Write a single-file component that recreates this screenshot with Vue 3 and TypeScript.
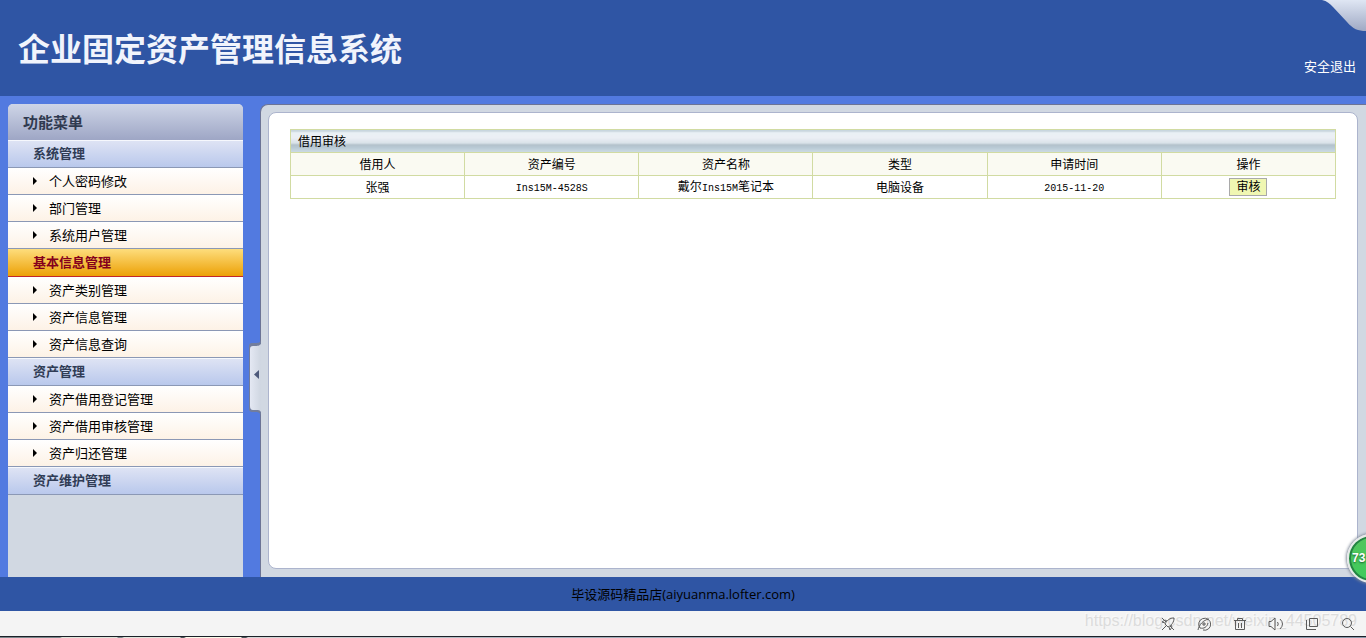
<script setup lang="ts">
import { ref } from 'vue'

interface MenuGroup {
  title: string
  active?: boolean
  items: string[]
}

interface Loan {
  borrower: string
  code: string
  name: [string, string, string]
  kind: string
  date: string
}

const groups: MenuGroup[] = [
  { title: '系统管理', items: ['个人密码修改', '部门管理', '系统用户管理'] },
  { title: '基本信息管理', active: true, items: ['资产类别管理', '资产信息管理', '资产信息查询'] },
  { title: '资产管理', items: ['资产借用登记管理', '资产借用审核管理', '资产归还管理'] },
  { title: '资产维护管理', items: [] },
]

const columns: string[] = ['借用人', '资产编号', '资产名称', '类型', '申请时间', '操作']

const loans = ref<Loan[]>([
  { borrower: '张强', code: 'Ins15M-4528S', name: ['戴尔', 'Ins15M', '笔记本'], kind: '电脑设备', date: '2015-11-20' },
])
</script>

<template>
  <div class="page">
    <header class="header">
      <h1>企业固定资产管理信息系统</h1>
      <a class="logout" href="#">安全退出</a>
      <svg class="corner" width="44" height="32" viewBox="0 0 44 32" aria-hidden="true">
        <defs>
          <linearGradient id="cornerFill" x1="0" y1="0" x2="0" y2="1">
            <stop offset="0" stop-color="#dfe6f3" />
            <stop offset="1" stop-color="#9fa9c4" />
          </linearGradient>
        </defs>
        <path d="M0 0C5 1 8 4 11 7L25 22C31 29 36 31 44 31V0Z" fill="url(#cornerFill)" />
      </svg>
    </header>

    <main class="main">
      <nav class="sidebar">
        <h2>功能菜单</h2>
        <section v-for="group in groups" :key="group.title">
          <h3 :class="{ active: group.active }">{{ group.title }}</h3>
          <ul v-if="group.items.length">
            <li v-for="item in group.items" :key="item">
              <a href="#">
                <svg width="4" height="8" viewBox="0 0 4 8" aria-hidden="true"><path d="M0 0L4 4L0 8Z" /></svg>
                <span>{{ item }}</span>
              </a>
            </li>
          </ul>
        </section>
      </nav>

      <div class="frame">
        <button class="toggle" type="button" aria-label="收起菜单">
          <svg width="12" height="74" viewBox="0 0 12 74" aria-hidden="true">
            <defs>
              <linearGradient id="tabFill" x1="0" y1="0" x2="1" y2="0">
                <stop offset="0" stop-color="#e4e8f3" />
                <stop offset="1" stop-color="#cfd6e1" />
              </linearGradient>
            </defs>
            <path d="M12 0C10 2 9 2 3 2Q0 2 0 5V68Q0 71 3 71H8Q10 71 12 74Z" fill="#727d9c" />
            <path d="M12 3C10 5 9 5 4 5Q1 5 1 8V65Q1 69 4 69H9Q11 69 12 71Z" fill="url(#tabFill)" />
            <path d="M10 29V38L5 33.500Z" fill="#4d597b" />
          </svg>
        </button>
        <div class="sheet">
          <table>
            <thead>
              <tr class="caption"><th colspan="6">借用审核</th></tr>
              <tr class="heads"><th v-for="column in columns" :key="column">{{ column }}</th></tr>
            </thead>
            <tbody>
              <tr v-for="loan in loans" :key="loan.code">
                <td>{{ loan.borrower }}</td>
                <td><span class="latin">{{ loan.code }}</span></td>
                <td>{{ loan.name[0] }}<span class="latin">{{ loan.name[1] }}</span>{{ loan.name[2] }}</td>
                <td>{{ loan.kind }}</td>
                <td><span class="latin">{{ loan.date }}</span></td>
                <td class="action"><button class="review" type="button">审核</button></td>
              </tr>
            </tbody>
          </table>
        </div>
      </div>
      <div class="meter">73</div>
    </main>

    <footer class="footer">毕设源码精品店(aiyuanma.lofter.com)</footer>

    <div class="statusbar">
      <span class="mark">https://blog.csdn.net/weixin_44505789</span>
      <button type="button" aria-label="加速">
        <svg width="14" height="14" viewBox="0 0 14 14"><path d="M13 1C9 1 6 3 4 7L7 10C11 8 13 5 13 1ZM4 6L1 5L4 3L6 4M8 10L9 13L11 10L10 8M5 9L1 13M1 1L5 5M9 9L13 13" /></svg>
      </button>
      <button type="button" aria-label="省流">
        <svg width="14" height="14" viewBox="0 0 14 14"><path d="M3 11A6 6 0 1 1 6 13M1 13C2 8 6 3 12 2M3 11C7 12 10 10 11 6M5 7H9M7 5V9" /></svg>
      </button>
      <button type="button" aria-label="清理">
        <svg width="14" height="14" viewBox="0 0 14 14"><path d="M1 3.500H13M4.500 3V1.500H9.500V3M2.500 4V12.500H11.500V4M5.500 6V11M8.500 6V11" /></svg>
      </button>
      <button type="button" aria-label="声音">
        <svg width="16" height="14" viewBox="0 0 16 14"><path d="M1 4.500H3L7 1V13L3 9.500H1ZM9.500 5Q11 7 9.500 9M12 2Q17 7 12 12" /></svg>
      </button>
      <button type="button" aria-label="窗口">
        <svg width="14" height="14" viewBox="0 0 14 14"><path d="M4.500 1.500H12.500V9.500H4.500ZM1.500 3V12.500H11" /></svg>
      </button>
      <button type="button" aria-label="缩放">
        <svg width="14" height="14" viewBox="0 0 14 14"><circle cx="6" cy="6" r="4.500" /><path d="M9.500 9.500L13 13" /></svg>
      </button>
    </div>
    <div class="taskbar"></div>
  </div>
</template>

<style>
body {
  margin: 0;
}
</style>

<style scoped>
.page {
  display: flex;
  flex-direction: column;
  min-height: 100vh;
  overflow: hidden;
  background: #527ae0;
  color: #000;
  font-family: "Open Sans", "Noto Sans CJK SC", sans-serif;
  font-size: 13px;
}

h1,
h2,
h3,
ul {
  margin: 0;
  padding: 0;
  list-style: none;
}

a {
  color: inherit;
  text-decoration: none;
}

button {
  padding: 0;
  border: 0;
  background: none;
  font-family: inherit;
}

svg {
  display: block;
}

.header {
  position: relative;
  display: flex;
  justify-content: space-between;
  box-sizing: border-box;
  height: 96px;
  padding: 0 10px 0 18px;
  background: #2f55a4;
  color: #f1f4fc;
}

h1 {
  font-size: 32px;
  line-height: 98px;
  font-weight: 700;
}

.logout {
  padding-top: 56px;
  line-height: 20px;
  color: #fff;
}

.corner {
  position: absolute;
  top: 0;
  right: 0;
}

.main {
  position: relative;
  flex: 1;
  display: flex;
  gap: 17px;
  padding: 8px 0 0 8px;
}

.sidebar {
  flex: none;
  width: 235px;
  border-radius: 5px 5px 0 0;
  overflow: hidden;
  background: #d1d8e2;
}

h2 {
  height: 36px;
  padding-left: 15px;
  background: linear-gradient(#ced5e7, #9ea6c5);
  color: #303a50;
  font-size: 15px;
  line-height: 36px;
}

h3 {
  box-sizing: border-box;
  height: 28px;
  padding-left: 25px;
  border-top: 1px solid #f6f8fd;
  border-bottom: 1px solid #8b98b5;
  background: linear-gradient(#dee3f4, #b9c8ec);
  color: #303c55;
  font-size: 13px;
  line-height: 25px;
}

h3.active {
  border-top-color: #fddc7c;
  border-bottom-color: #c1272d;
  background: linear-gradient(#fddb78, #eca107);
  color: #84001c;
}

li a {
  box-sizing: border-box;
  display: flex;
  align-items: center;
  gap: 12px;
  height: 27px;
  padding-left: 25px;
  border-bottom: 1px solid #8b98b5;
  background: linear-gradient(#fff, #fdf2e6);
  line-height: 26px;
}

.frame {
  position: relative;
  flex: 1;
  display: flex;
  padding: 7px 8px 8px 7px;
  border-top: 1px solid #6c7496;
  border-left: 1px solid #6c7496;
  border-radius: 8px 0 0 0;
  background: #d1d8e2;
}

.toggle {
  position: absolute;
  left: -12px;
  top: 50%;
}

.sheet {
  flex: 1;
  padding: 16px 21px;
  border: 1px solid #acb4cd;
  border-radius: 8px;
  background: #fff;
}

table {
  width: 100%;
  table-layout: fixed;
  border-collapse: collapse;
  font-size: 12px;
  line-height: 18px;
}

th,
td {
  height: 20px;
  padding: 2px 0 0;
  border: 1px solid #d1dba2;
  text-align: center;
  font-weight: 400;
}

.caption th {
  padding-left: 7px;
  background: linear-gradient(#b9c8d2 0, #e9f0f5 2px, #eceff5 7px, #d8e1e8 13px, #b1c0ca 14px, #b8c9d4 17px, #cddce5 22px);
  text-align: left;
}

.heads th {
  background: #fafaf2;
}

td.action {
  height: 22px;
  padding: 0;
}

.latin {
  font-family: "Liberation Mono", monospace;
  font-size: 10px;
}

.review {
  display: block;
  box-sizing: border-box;
  width: 38px;
  height: 18px;
  margin: 0 auto;
  border: 1px solid #a9a9a9;
  background: #f0f7b2;
  color: #000;
  font-size: 12px;
  line-height: 16px;
}

.meter {
  position: absolute;
  right: -30px;
  bottom: -6px;
  box-sizing: border-box;
  width: 49px;
  height: 49px;
  padding-left: 3px;
  border: 2px solid #e6e9e9;
  border-radius: 50%;
  background: linear-gradient(#53c55e, #3ecb5c);
  box-shadow: inset 0 0 0 2px #248343, 0 0 3px 1px #808a99;
  color: #fff;
  font-family: "Liberation Sans", Arial, sans-serif;
  font-size: 12px;
  font-weight: 700;
  line-height: 44px;
  text-shadow: 0 1px 2px #135c2a;
}

.footer {
  height: 34px;
  background: #2f55a4;
  line-height: 34px;
  text-align: center;
}

.statusbar {
  position: relative;
  box-sizing: border-box;
  display: flex;
  align-items: center;
  justify-content: flex-end;
  gap: 12px;
  height: 25px;
  padding-right: 6px;
  background: #f4f4f4;
}

.statusbar button {
  position: relative;
  display: flex;
  justify-content: center;
  width: 24px;
}

.statusbar svg {
  fill: none;
  stroke: #5c5c5c;
  stroke-width: 1;
}

.mark {
  position: absolute;
  right: 9px;
  top: 0;
  color: #dcdcdc;
  font-family: "Liberation Sans", Arial, sans-serif;
  font-size: 16px;
  line-height: 19px;
  text-shadow: -1px -1px 0 #fafafa;
}

.taskbar {
  height: 1px;
  border-top: 1px solid #1b2028;
  background: linear-gradient(90deg, #7b878b 60px, #dfe4da 62px, #dfe4da 117px, #7b878b 118px, #7b878b 122px, #e2e7dd 124px, #dfe4da 180px, #4c565a 181px, #4c565a 184px, #fafbe9 186px, #fafbe9 241px, #4c565a 242px, #4c565a 246px, #d5d7d6 248px, #a5afba 560px, #8b99ab);
}
</style>
